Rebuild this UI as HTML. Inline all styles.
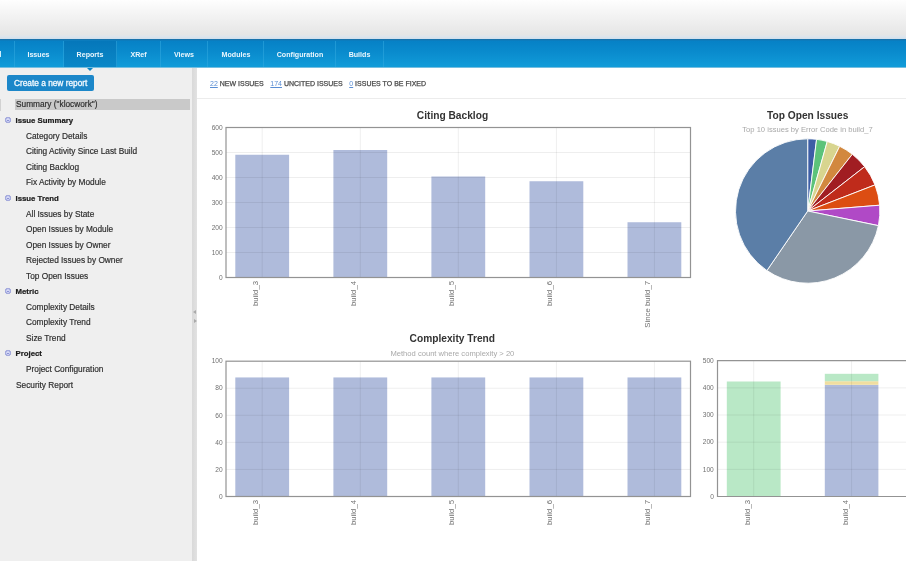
<!DOCTYPE html>
<html><head><meta charset="utf-8">
<style>
*{margin:0;padding:0;box-sizing:border-box}
html,body{width:909px;height:565px;overflow:hidden;background:#fff;font-family:"Liberation Sans",sans-serif}
body{filter:blur(0.45px)}
.abs{position:absolute}
#top{left:0;top:0;width:906px;height:39px;background:linear-gradient(#fefefe 0%,#f4f4f4 35%,#e6e6e6 88%,#dde5ec 94%,#d0dfec 100%)}
#nav{left:0;top:39px;width:906px;height:29px;background:linear-gradient(#1f6ea3 0px,#0681c6 2px,#0a8cce 14px,#119cd9 28px,#d9e2e8 29px)}
.tab{position:absolute;top:40.5px;height:28px;color:#eaf6fd;font-weight:bold;font-size:7.1px;line-height:28px;text-align:center}
.sep{position:absolute;top:41px;width:1px;height:26px;background:#2ea6de;opacity:.6}
#active{left:64px;top:41px;width:53px;height:26px;background:linear-gradient(#0577ba,#0a88c8)}
#arrow{z-index:5;left:86.5px;top:67.5px;width:0;height:0;border-left:3.5px solid transparent;border-right:3.5px solid transparent;border-top:3.5px solid #0b86c6}
#side{left:0;top:68px;width:192px;height:493px;background:#efefef}
#sideb{left:192px;top:68px;width:5px;height:493px;background:linear-gradient(90deg,#d9d9d9,#e2e2e2)}
#btn{left:7px;top:74.5px;width:87px;height:16.5px;background:#1c87c9;border-radius:2px;color:#f4faff;font-size:8.3px;-webkit-text-stroke:0.3px #f4faff;line-height:16.5px;padding-left:7px;white-space:nowrap}
.it{position:absolute;font-size:8.3px;color:#2e2e2e;-webkit-text-stroke:0.18px #2e2e2e;white-space:nowrap;line-height:10px}
.hd{position:absolute;font-size:7.8px;color:#1a1a1a;-webkit-text-stroke:0.2px #1a1a1a;font-weight:bold;white-space:nowrap;line-height:10px}
.ico{position:absolute;width:6.4px;height:6.4px;border:1.1px solid #8c93d6;background:radial-gradient(#dfe2f8,#b9bfec);border-radius:2.4px}
.ico:after{content:"";position:absolute;left:0.6px;top:1.5px;width:2.8px;height:1px;background:#8d93d6}
#stats{left:210px;top:78.5px;font-size:7px;color:#4a4a4a;font-weight:normal;-webkit-text-stroke:0.25px #4a4a4a;white-space:nowrap;line-height:10px}
#stats u{color:#5a8ed4;-webkit-text-stroke:0;text-decoration-thickness:0.6px}
#stats span{display:inline-block;width:6.6px}
#hline{left:197px;top:97.5px;width:709px;height:1px;background:#ececec}
</style></head>
<body>
<div class="abs" id="top"></div>
<div class="abs" id="nav"></div>
<div class="abs" id="active"></div>
<div class="abs" id="arrow"></div>
<div class="sep" style="left:14px"></div>
<div class="sep" style="left:63px"></div>
<div class="sep" style="left:116px"></div>
<div class="sep" style="left:160px"></div>
<div class="sep" style="left:207px"></div>
<div class="sep" style="left:263px"></div>
<div class="sep" style="left:335px"></div>
<div class="sep" style="left:383px"></div>
<div class="abs" style="left:0;top:51px;width:1.3px;height:6px;background:#cfeefc"></div>
<div class="tab" style="left:14px;width:49px">Issues</div>
<div class="tab" style="left:64px;width:52px">Reports</div>
<div class="tab" style="left:117px;width:43px">XRef</div>
<div class="tab" style="left:161px;width:46px">Views</div>
<div class="tab" style="left:208px;width:56px">Modules</div>
<div class="tab" style="left:265px;width:70px">Configuration</div>
<div class="tab" style="left:336px;width:47px">Builds</div>

<div class="abs" id="side"></div>
<div class="abs" id="sideb"></div>
<div class="abs" style="left:193px;top:309.5px;width:0;height:0;border-top:2.5px solid transparent;border-bottom:2.5px solid transparent;border-right:3px solid #a9a9a9"></div>
<div class="abs" style="left:194px;top:318.5px;width:0;height:0;border-top:2.5px solid transparent;border-bottom:2.5px solid transparent;border-left:3px solid #a9a9a9"></div>
<div class="abs" id="btn">Create a new report</div>

<div class="abs" style="left:0;top:99px;width:1.2px;height:12px;background:#d2d2d2"></div>
<div class="abs" style="left:15px;top:99px;width:175px;height:11px;background:#c9c9c9"></div>
<div class="it" style="left:16px;top:99px">Summary ("klocwork")</div>
<div class="ico" style="left:5px;top:117px"></div>
<div class="hd" style="left:15.5px;top:115.8px">Issue Summary</div>
<div class="it" style="left:26px;top:130.5px">Category Details</div>
<div class="it" style="left:26px;top:146px">Citing Activity Since Last Build</div>
<div class="it" style="left:26px;top:161.5px">Citing Backlog</div>
<div class="it" style="left:26px;top:177px">Fix Activity by Module</div>
<div class="ico" style="left:5px;top:195px"></div>
<div class="hd" style="left:15.5px;top:193.8px">Issue Trend</div>
<div class="it" style="left:26px;top:208.5px">All Issues by State</div>
<div class="it" style="left:26px;top:224px">Open Issues by Module</div>
<div class="it" style="left:26px;top:239.5px">Open Issues by Owner</div>
<div class="it" style="left:26px;top:255px">Rejected Issues by Owner</div>
<div class="it" style="left:26px;top:270.5px">Top Open Issues</div>
<div class="ico" style="left:5px;top:288px"></div>
<div class="hd" style="left:15.5px;top:286.8px">Metric</div>
<div class="it" style="left:26px;top:301.5px">Complexity Details</div>
<div class="it" style="left:26px;top:317px">Complexity Trend</div>
<div class="it" style="left:26px;top:332.5px">Size Trend</div>
<div class="ico" style="left:5px;top:350px"></div>
<div class="hd" style="left:15.5px;top:348.8px">Project</div>
<div class="it" style="left:26px;top:363.5px">Project Configuration</div>
<div class="it" style="left:16px;top:379.5px">Security Report</div>

<div class="abs" id="stats"><u>22</u> NEW ISSUES<span></span><u>174</u> UNCITED ISSUES<span></span><u>0</u> ISSUES TO BE FIXED</div>
<div class="abs" id="hline"></div>

<svg class="abs" style="left:0;top:0" width="909" height="565" font-family="Liberation Sans, sans-serif">
<rect x="235.30" y="154.75" width="53.8" height="122.75" fill="#afbbdb" />
<rect x="333.40" y="150.00" width="53.8" height="127.50" fill="#afbbdb" />
<rect x="431.40" y="176.50" width="53.8" height="101.00" fill="#afbbdb" />
<rect x="529.50" y="181.25" width="53.8" height="96.25" fill="#afbbdb" />
<rect x="627.50" y="222.25" width="53.8" height="55.25" fill="#afbbdb" />
<line x1="226" y1="152.50" x2="690.5" y2="152.50" stroke="#000" stroke-opacity="0.065" stroke-width="1"/>
<line x1="226" y1="177.50" x2="690.5" y2="177.50" stroke="#000" stroke-opacity="0.065" stroke-width="1"/>
<line x1="226" y1="202.50" x2="690.5" y2="202.50" stroke="#000" stroke-opacity="0.065" stroke-width="1"/>
<line x1="226" y1="227.50" x2="690.5" y2="227.50" stroke="#000" stroke-opacity="0.065" stroke-width="1"/>
<line x1="226" y1="252.50" x2="690.5" y2="252.50" stroke="#000" stroke-opacity="0.065" stroke-width="1"/>
<line x1="262.2" y1="127.5" x2="262.2" y2="277.5" stroke="#000" stroke-opacity="0.065" stroke-width="1"/>
<line x1="360.3" y1="127.5" x2="360.3" y2="277.5" stroke="#000" stroke-opacity="0.065" stroke-width="1"/>
<line x1="458.3" y1="127.5" x2="458.3" y2="277.5" stroke="#000" stroke-opacity="0.065" stroke-width="1"/>
<line x1="556.4" y1="127.5" x2="556.4" y2="277.5" stroke="#000" stroke-opacity="0.065" stroke-width="1"/>
<line x1="654.4" y1="127.5" x2="654.4" y2="277.5" stroke="#000" stroke-opacity="0.065" stroke-width="1"/>
<rect x="226" y="127.5" width="464.5" height="150.0" fill="none" stroke="#939393" stroke-width="1.2"/>
<text x="222.7" y="129.70" font-size="6.6" fill="#707070" text-anchor="end">600</text>
<text x="222.7" y="154.70" font-size="6.6" fill="#707070" text-anchor="end">500</text>
<text x="222.7" y="179.70" font-size="6.6" fill="#707070" text-anchor="end">400</text>
<text x="222.7" y="204.70" font-size="6.6" fill="#707070" text-anchor="end">300</text>
<text x="222.7" y="229.70" font-size="6.6" fill="#707070" text-anchor="end">200</text>
<text x="222.7" y="254.70" font-size="6.6" fill="#707070" text-anchor="end">100</text>
<text x="222.7" y="279.70" font-size="6.6" fill="#707070" text-anchor="end">0</text>
<text transform="translate(258.2,280.9) rotate(-90)" font-size="7.8" fill="#707070" text-anchor="end">build_3</text>
<text transform="translate(356.3,280.9) rotate(-90)" font-size="7.8" fill="#707070" text-anchor="end">build_4</text>
<text transform="translate(454.3,280.9) rotate(-90)" font-size="7.8" fill="#707070" text-anchor="end">build_5</text>
<text transform="translate(552.4,280.9) rotate(-90)" font-size="7.8" fill="#707070" text-anchor="end">build_6</text>
<text transform="translate(650.4,280.9) rotate(-90)" font-size="7.8" fill="#707070" text-anchor="end">Since build_7</text>
<text x="452.5" y="118.6" font-size="10.2" font-weight="bold" fill="#333" text-anchor="middle">Citing Backlog</text>
<rect x="235.30" y="377.44" width="53.8" height="119.06" fill="#afbbdb" />
<rect x="333.40" y="377.44" width="53.8" height="119.06" fill="#afbbdb" />
<rect x="431.40" y="377.44" width="53.8" height="119.06" fill="#afbbdb" />
<rect x="529.50" y="377.44" width="53.8" height="119.06" fill="#afbbdb" />
<rect x="627.50" y="377.44" width="53.8" height="119.06" fill="#afbbdb" />
<line x1="226" y1="388.26" x2="690.5" y2="388.26" stroke="#000" stroke-opacity="0.065" stroke-width="1"/>
<line x1="226" y1="415.32" x2="690.5" y2="415.32" stroke="#000" stroke-opacity="0.065" stroke-width="1"/>
<line x1="226" y1="442.38" x2="690.5" y2="442.38" stroke="#000" stroke-opacity="0.065" stroke-width="1"/>
<line x1="226" y1="469.44" x2="690.5" y2="469.44" stroke="#000" stroke-opacity="0.065" stroke-width="1"/>
<line x1="262.2" y1="361.2" x2="262.2" y2="496.5" stroke="#000" stroke-opacity="0.065" stroke-width="1"/>
<line x1="360.3" y1="361.2" x2="360.3" y2="496.5" stroke="#000" stroke-opacity="0.065" stroke-width="1"/>
<line x1="458.3" y1="361.2" x2="458.3" y2="496.5" stroke="#000" stroke-opacity="0.065" stroke-width="1"/>
<line x1="556.4" y1="361.2" x2="556.4" y2="496.5" stroke="#000" stroke-opacity="0.065" stroke-width="1"/>
<line x1="654.4" y1="361.2" x2="654.4" y2="496.5" stroke="#000" stroke-opacity="0.065" stroke-width="1"/>
<rect x="226" y="361.2" width="464.5" height="135.3" fill="none" stroke="#939393" stroke-width="1.2"/>
<text x="222.7" y="363.40" font-size="6.6" fill="#707070" text-anchor="end">100</text>
<text x="222.7" y="390.46" font-size="6.6" fill="#707070" text-anchor="end">80</text>
<text x="222.7" y="417.52" font-size="6.6" fill="#707070" text-anchor="end">60</text>
<text x="222.7" y="444.58" font-size="6.6" fill="#707070" text-anchor="end">40</text>
<text x="222.7" y="471.64" font-size="6.6" fill="#707070" text-anchor="end">20</text>
<text x="222.7" y="498.70" font-size="6.6" fill="#707070" text-anchor="end">0</text>
<text transform="translate(258.2,499.9) rotate(-90)" font-size="7.8" fill="#707070" text-anchor="end">build_3</text>
<text transform="translate(356.3,499.9) rotate(-90)" font-size="7.8" fill="#707070" text-anchor="end">build_4</text>
<text transform="translate(454.3,499.9) rotate(-90)" font-size="7.8" fill="#707070" text-anchor="end">build_5</text>
<text transform="translate(552.4,499.9) rotate(-90)" font-size="7.8" fill="#707070" text-anchor="end">build_6</text>
<text transform="translate(650.4,499.9) rotate(-90)" font-size="7.8" fill="#707070" text-anchor="end">build_7</text>
<text x="452.3" y="342.3" font-size="10.2" font-weight="bold" fill="#333" text-anchor="middle">Complexity Trend</text>
<text x="452.4" y="356" font-size="7.6" fill="#a8a8a8" text-anchor="middle">Method count where complexity &gt; 20</text>
<rect x="726.8" y="381.5" width="53.8" height="115.00" fill="#b9e8c6" />
<rect x="824.8" y="384.8" width="53.6" height="111.70" fill="#afbbdb" />
<rect x="824.8" y="381.2" width="53.6" height="3.6" fill="#f0dea0" />
<rect x="824.8" y="373.8" width="53.6" height="7.4" fill="#b9e8c6" />
<line x1="717.5" y1="387.86" x2="906" y2="387.86" stroke="#000" stroke-opacity="0.065" stroke-width="1"/>
<line x1="717.5" y1="415.02" x2="906" y2="415.02" stroke="#000" stroke-opacity="0.065" stroke-width="1"/>
<line x1="717.5" y1="442.18" x2="906" y2="442.18" stroke="#000" stroke-opacity="0.065" stroke-width="1"/>
<line x1="717.5" y1="469.34" x2="906" y2="469.34" stroke="#000" stroke-opacity="0.065" stroke-width="1"/>
<line x1="753.7" y1="360.7" x2="753.7" y2="496.5" stroke="#000" stroke-opacity="0.065" stroke-width="1"/>
<line x1="851.6" y1="360.7" x2="851.6" y2="496.5" stroke="#000" stroke-opacity="0.065" stroke-width="1"/>
<path d="M906 360.7 H717.5 V496.5 H906" fill="none" stroke="#939393" stroke-width="1.2"/>
<text x="713.8" y="362.90" font-size="6.6" fill="#707070" text-anchor="end">500</text>
<text x="713.8" y="390.06" font-size="6.6" fill="#707070" text-anchor="end">400</text>
<text x="713.8" y="417.22" font-size="6.6" fill="#707070" text-anchor="end">300</text>
<text x="713.8" y="444.38" font-size="6.6" fill="#707070" text-anchor="end">200</text>
<text x="713.8" y="471.54" font-size="6.6" fill="#707070" text-anchor="end">100</text>
<text x="713.8" y="498.70" font-size="6.6" fill="#707070" text-anchor="end">0</text>
<text transform="translate(749.7,499.9) rotate(-90)" font-size="7.8" fill="#707070" text-anchor="end">build_3</text>
<text transform="translate(847.6,499.9) rotate(-90)" font-size="7.8" fill="#707070" text-anchor="end">build_4</text>
<path d="M807.7 211.0 L807.70 138.80 A72.2 72.2 0 0 1 816.57 139.35 Z" fill="#3d5ea6" stroke="#fff" stroke-width="0.9" stroke-linejoin="round"/>
<path d="M807.7 211.0 L816.57 139.35 A72.2 72.2 0 0 1 827.24 141.49 Z" fill="#5cc37a" stroke="#fff" stroke-width="0.9" stroke-linejoin="round"/>
<path d="M807.7 211.0 L827.24 141.49 A72.2 72.2 0 0 1 839.69 146.27 Z" fill="#d8d58f" stroke="#fff" stroke-width="0.9" stroke-linejoin="round"/>
<path d="M807.7 211.0 L839.69 146.27 A72.2 72.2 0 0 1 852.35 154.26 Z" fill="#d2883f" stroke="#fff" stroke-width="0.9" stroke-linejoin="round"/>
<path d="M807.7 211.0 L852.35 154.26 A72.2 72.2 0 0 1 864.67 166.65 Z" fill="#a11d22" stroke="#fff" stroke-width="0.9" stroke-linejoin="round"/>
<path d="M807.7 211.0 L864.67 166.65 A72.2 72.2 0 0 1 875.01 184.89 Z" fill="#bf2b1b" stroke="#fff" stroke-width="0.9" stroke-linejoin="round"/>
<path d="M807.7 211.0 L875.01 184.89 A72.2 72.2 0 0 1 879.67 205.21 Z" fill="#dc4d12" stroke="#fff" stroke-width="0.9" stroke-linejoin="round"/>
<path d="M807.7 211.0 L879.67 205.21 A72.2 72.2 0 0 1 878.40 225.64 Z" fill="#b049c6" stroke="#fff" stroke-width="0.9" stroke-linejoin="round"/>
<path d="M807.7 211.0 L878.40 225.64 A72.2 72.2 0 0 1 766.91 270.57 Z" fill="#8a98a6" stroke="#fff" stroke-width="0.9" stroke-linejoin="round"/>
<path d="M807.7 211.0 L766.91 270.57 A72.2 72.2 0 0 1 807.70 138.80 Z" fill="#5b7ea7" stroke="#fff" stroke-width="0.9" stroke-linejoin="round"/>
<text x="807.7" y="119.1" font-size="10.2" font-weight="bold" fill="#333" text-anchor="middle">Top Open Issues</text>
<text x="807.5" y="132.3" font-size="7.6" fill="#a8a8a8" text-anchor="middle">Top 10 issues by Error Code in build_7</text>
</svg>
</body></html>
